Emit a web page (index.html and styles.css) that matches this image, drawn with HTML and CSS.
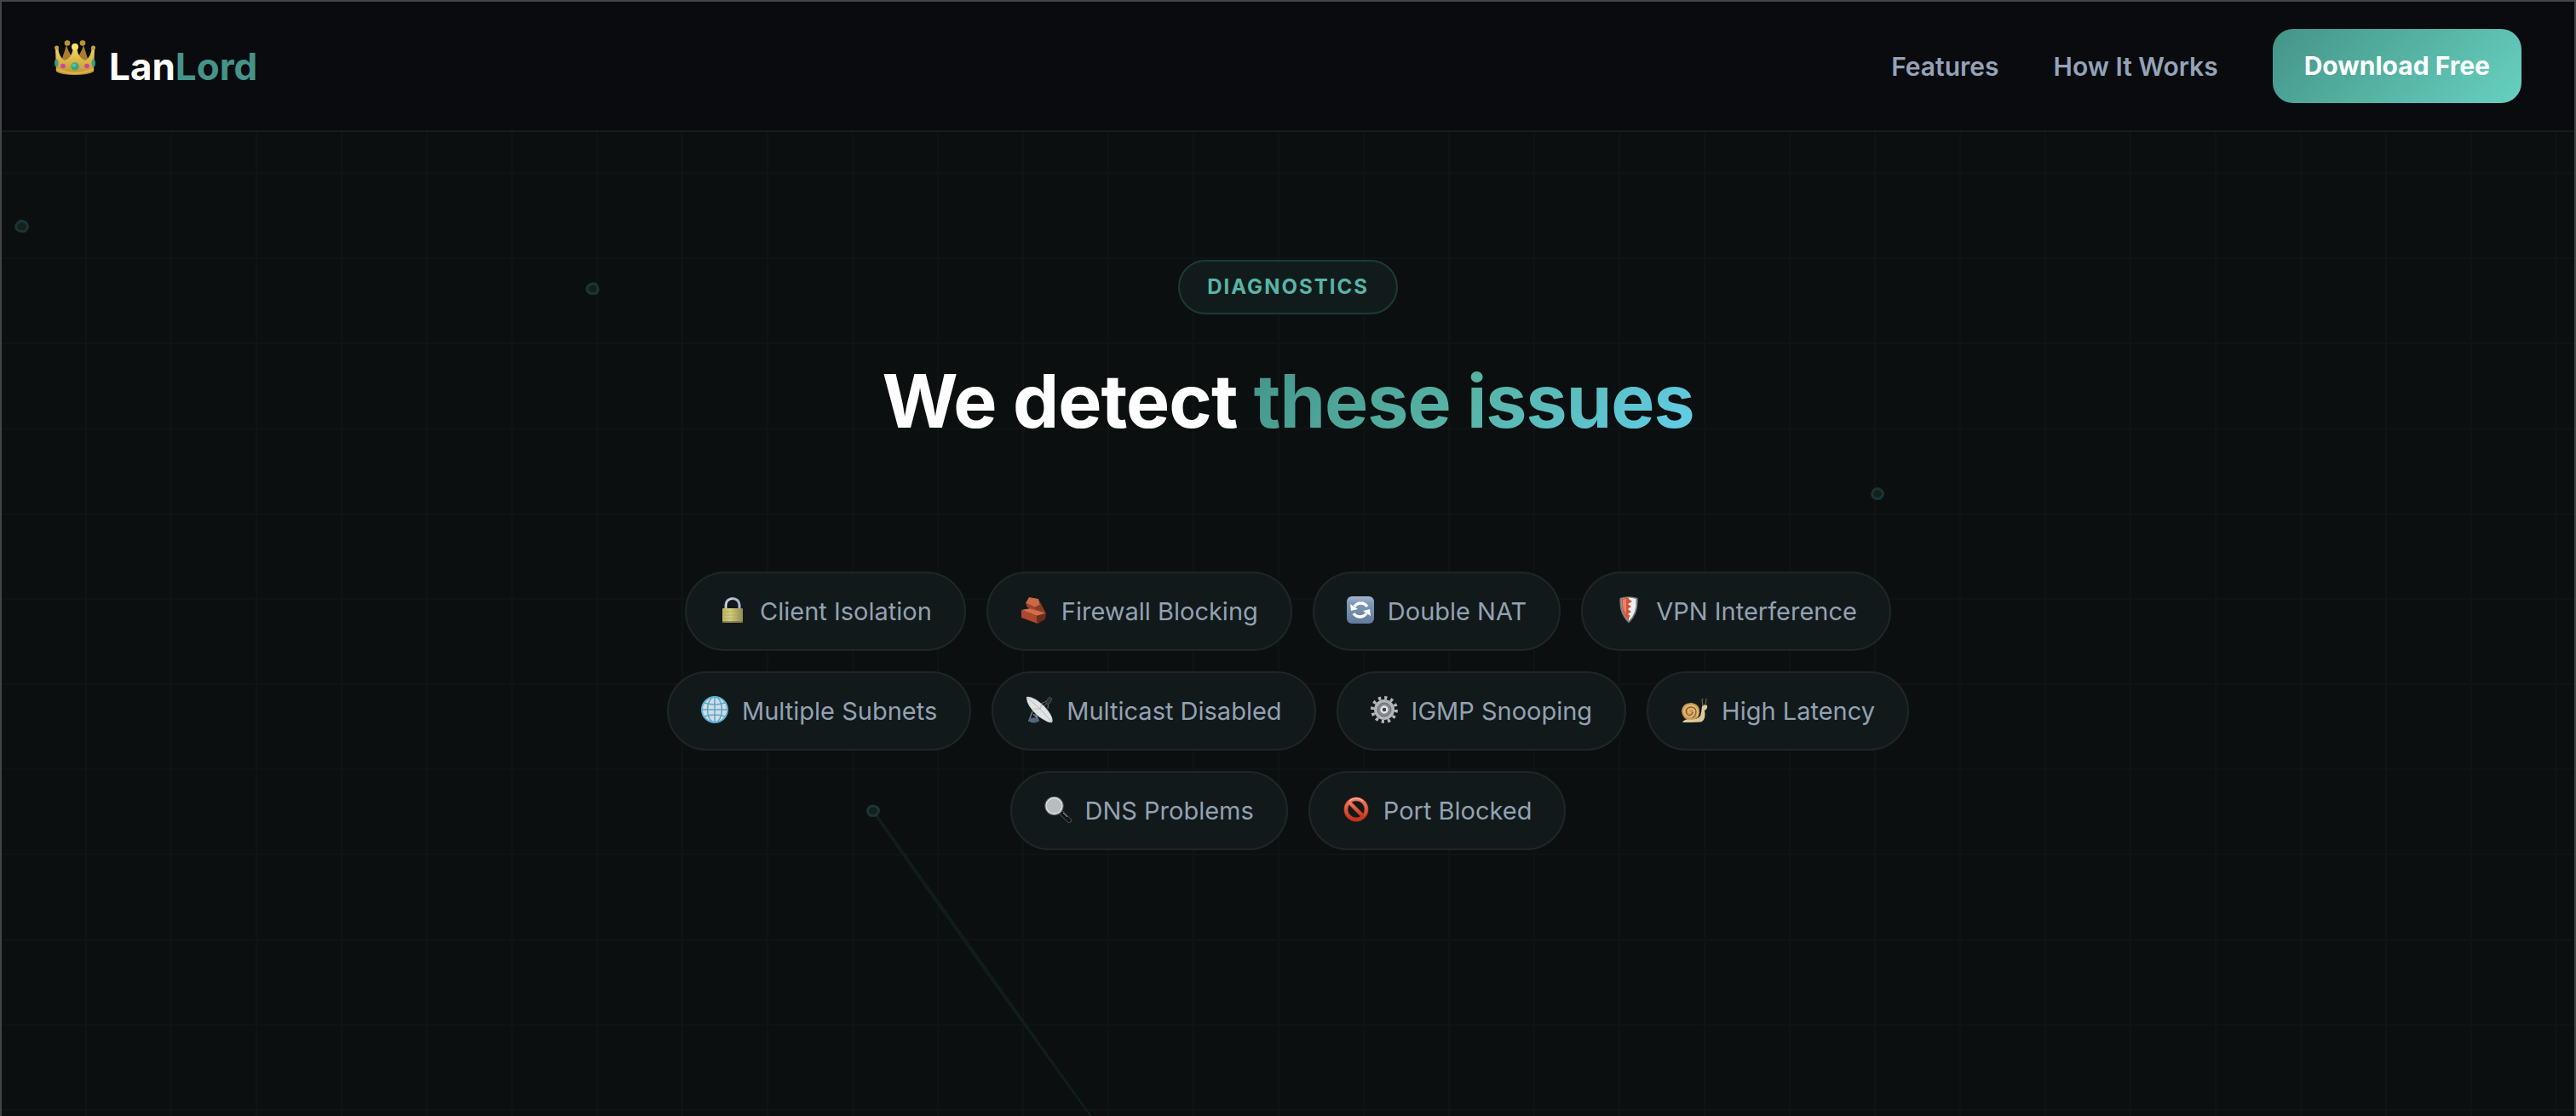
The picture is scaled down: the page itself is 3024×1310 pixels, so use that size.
FILE: index.html
```html
<!DOCTYPE html>
<html lang="en">
<head>
<meta charset="utf-8">
<meta name="viewport" content="width=device-width, initial-scale=1">
<title>LanLord</title>
<link rel="stylesheet" href="styles.css">
</head>
<body>
<svg class="network" aria-hidden="true">
  <g class="network-links">
    <path d="M1028 955Q1156 1134 1282 1312"/>
    <path d="M1027 956Q1152 1136 1282 1312"/>
  </g>
  <g class="network-nodes">
    <path d="M20 263Q24 257 30 261Q35 266 30 271Q22 273 19 268Q18 265 20 263Z"/>
    <path d="M690 336Q695 331 700 334Q704 340 700 344Q693 346 690 342Q688 339 690 336Z"/>
    <path d="M2199 576Q2204 571 2209 576Q2213 580 2207 585Q2201 587 2198 582Q2197 579 2199 576Z"/>
    <path d="M1020 948Q1024 944 1030 948Q1034 952 1028 957Q1021 959 1019 954Q1018 950 1020 948Z"/>
  </g>
</svg>

<header class="header">
  <a class="logo" href="#">
    <svg class="logo-crown" viewBox="0 0 48 42" aria-hidden="true">
      <defs><linearGradient id="gold" x1="0" y1="0" x2="0" y2="1"><stop offset="0" stop-color="#f3dc5f"/><stop offset="1" stop-color="#c08f33"/></linearGradient></defs>
      <path d="M7 28L14 6Q18 20 24 20Q30 20 34 6L41 28Z" fill="#a97b31"/>
      <g fill="#b8933b"><circle cx="15" cy="3.500" r="3.300"/><circle cx="33" cy="3.500" r="3.300"/></g>
      <path d="M1 9L4 8Q5 20 12 24Q20 22 22 9H26Q28 22 36 24Q43 20 44 8L47 9L46 37Q40 41 24 41Q8 41 2 37Z" fill="url(#gold)"/>
      <g fill="#c6a23c"><circle cx="2.500" cy="9" r="2.500"/><circle cx="45.500" cy="9" r="2.500"/></g>
      <circle cx="24" cy="8" r="4" fill="#f8e266"/>
      <path d="M2 34Q14 39 24 39Q34 39 46 34" fill="none" stroke="#dcb548" stroke-width="2"/>
      <circle cx="24" cy="31" r="4.700" fill="#3aa384"/><circle cx="23" cy="29.500" r="2" fill="#63c8a5"/>
      <circle cx="10" cy="30.500" r="2.800" fill="#c545a8"/><circle cx="38" cy="30.500" r="2.800" fill="#c545a8"/>
      <ellipse cx="2.300" cy="27" rx="2.200" ry="4.500" fill="#3f9e80"/><ellipse cx="45.700" cy="27" rx="2.200" ry="4.500" fill="#3f9e80"/>
    </svg>
    <span class="logo-name">Lan<span class="logo-accent">Lord</span></span>
  </a>
  <nav class="nav">
    <a class="nav-link" href="#features">Features</a>
    <a class="nav-link" href="#how">How It Works</a>
    <a class="button" href="#download">Download Free</a>
  </nav>
</header>

<main class="diagnostics">
  <p class="tag">DIAGNOSTICS</p>
  <h1 class="title">We detect <span class="title-accent">these issues</span></h1>
  <ul class="issues">
    <li class="issue">
      <svg class="icon" viewBox="0 0 32 32" aria-hidden="true">
        <defs><linearGradient id="brass"><stop offset="0" stop-color="#b9b367"/><stop offset=".4" stop-color="#d3cd7e"/><stop offset="1" stop-color="#8f8a51"/></linearGradient></defs>
        <path d="M8 15V10a8 7.500 0 0 1 16 0v5" fill="none" stroke="#a9b9d0" stroke-width="3"/>
        <path d="M8.500 14V10a7.500 7 0 0 1 7-7" fill="none" stroke="#e8eef5" stroke-width="1"/>
        <rect x="4" y="14" width="24" height="17" rx="1" fill="url(#brass)"/><path d="M4 18h24M4 22h24M4 26h24" stroke="#a6a05b" stroke-width=".6"/><path d="M4 30h24" stroke="#79733f" stroke-width="1.500"/>
      </svg>
      Client Isolation
    </li>
    <li class="issue">
      <svg class="icon" viewBox="0 0 32 32" aria-hidden="true">
        <path d="M10 1L21 3L23 10L17 13L6 8Z" fill="#cc6747"/><path d="M21 3L30 20L20 17L17 13L23 10Z" fill="#8d3b25"/>
        <path d="M1 16L12 14L30 20L19 23Z" fill="#d16c4c"/><path d="M1 16L19 23L20 32L1 25Z" fill="#ae472d"/><path d="M19 23L30 20L29 27L20 32Z" fill="#6e2b1d"/><path d="M6 8L17 13L20 17L8 13Z" fill="#a2452c"/>
      </svg>
      Firewall Blocking
    </li>
    <li class="issue">
      <svg class="icon" viewBox="0 0 32 32" aria-hidden="true">
        <defs><linearGradient id="key" x1="0" y1="0" x2="0" y2="1"><stop offset="0" stop-color="#a3b8d0"/><stop offset=".25" stop-color="#7d98b8"/><stop offset="1" stop-color="#617b9b"/></linearGradient></defs>
        <rect width="32" height="32" rx="6" fill="url(#key)"/>
        <path d="M9 12A9 9 0 0 1 24 12M23 20A9 9 0 0 1 8 20" fill="none" stroke="#fff" stroke-width="3.500"/>
        <path d="M4 9L5 17L13 15ZM28 23L27 15L19 17Z" fill="#fff"/>
      </svg>
      Double NAT
    </li>
    <li class="issue">
      <svg class="icon" viewBox="0 0 32 32" aria-hidden="true">
        <path d="M5.500 2Q16-1.500 26.500 2Q28 21 16 31.500Q4 21 5.500 2Z" fill="#777d7e"/>
        <path d="M7.500 3Q16 0 24.500 3Q26 19 16 29Q6 19 7.500 3Z" fill="#edf0f0"/>
        <path d="M7.500 3Q12 1.500 16 1.500V3L20 6L15 9L19 12L15 15L19 18L15 21L18 23L16 25V29Q6 19 7.500 3Z" fill="#d4553e"/>
        <path d="M9 4Q12 3 13 3V21Q8 14 9 4Z" fill="#e6836d"/>
      </svg>
      VPN Interference
    </li>
    <li class="issue">
      <svg class="icon" viewBox="0 0 32 32" aria-hidden="true">
        <circle cx="16" cy="16" r="15" fill="#d5dce0" stroke="#62b4d8" stroke-width="2"/>
        <g fill="none" stroke="#55a9d0" stroke-width="1.500"><path d="M16 1V31M1 16H31M4 8Q16 12 28 8M4 24Q16 20 28 24"/><ellipse cx="16" cy="16" rx="8.500" ry="15"/></g>
      </svg>
      Multiple Subnets
    </li>
    <li class="issue">
      <svg class="icon" viewBox="0 0 32 32" aria-hidden="true">
        <path d="M18 15L28 5M18 9L27 5L26 15" fill="none" stroke="#666d70"/><path d="M24 6L28 1L31 3L29 8L25 10Z" fill="#2b3135" stroke="#59636a" stroke-width=".6"/>
        <path d="M8 18L4 29L15 29L12 21M9 21L15 28" fill="none" stroke="#73818d" stroke-width="1.500"/><ellipse cx="9.500" cy="28.500" rx="6" ry="3" fill="#53677c"/>
        <path d="M1 1Q8-1 22 12Q34 25 31 31Q28 33 15 24Q0 11 1 1Z" fill="#c9cdd1"/><path d="M2 2Q10 1 22 13Q32 24 30 30Q18 28 10 18Q2 9 2 2Z" fill="#e1e4e6"/>
        <path d="M2 2L17 15L30 30M17 15L19 9M17 15L9 15" fill="none" stroke="#aab0b5" stroke-width=".8"/>
      </svg>
      Multicast Disabled
    </li>
    <li class="issue">
      <svg class="icon" viewBox="0 0 32 32" aria-hidden="true">
        <circle cx="16" cy="16" r="14" fill="none" stroke="#b2b6ba" stroke-width="4" stroke-dasharray="3.300 4"/>
        <circle cx="16" cy="16" r="10" fill="#858a90" stroke="#b2b6ba" stroke-width="4"/><circle cx="16" cy="16" r="8" fill="none" stroke="#666c72"/>
        <circle cx="16" cy="16" r="3.500" fill="#3c4248" stroke="#e1e3e5" stroke-width="2.500"/>
      </svg>
      IGMP Snooping
    </li>
    <li class="issue">
      <svg class="icon" viewBox="0 0 32 32" aria-hidden="true">
        <path d="M2 31Q5 26 15 27Q23 27 24 20L25 12Q27 9 31 11Q32 15 28 17Q30 26 25 30Q24 31 2 31Z" fill="#dec99b"/>
        <path d="M26 12L25 4M29 11L30 4" stroke="#76604a" stroke-width="1.200"/><circle cx="25.500" cy="4" r="1.300" fill="#503e31"/><circle cx="30" cy="4" r="1.300" fill="#503e31"/>
        <path d="M1 18Q2 8 12 8Q23 9 22 20Q21 28 12 28Q2 28 1 18Z" fill="#c99b55"/>
        <path d="M19 24Q22 12 12 11Q4 11 4 19Q6 25 12 24Q18 22 16 17Q13 13 10 16Q8 20 12 20" fill="none" stroke="#e3be7b" stroke-width="1.500"/>
        <path d="M14 26Q20 20 17 15Q12 11 7 15Q5 21 10 23Q14 22 14 19" fill="none" stroke="#7e4e27"/>
      </svg>
      High Latency
    </li>
    <li class="issue">
      <svg class="icon" viewBox="0 0 32 32" aria-hidden="true">
        <path d="M21 21L29 29" stroke="#555d62" stroke-width="6" stroke-linecap="round"/><path d="M21 21L29 29" stroke="#111518" stroke-width="4.500" stroke-linecap="round"/><path d="M22 20L27 25" stroke="#a6adb2"/>
        <circle cx="11.500" cy="12" r="10.500" fill="#b8bebe" stroke="#555d62" stroke-width="1.500"/><circle cx="11.500" cy="12" r="9.500" fill="none" stroke="#e0e5e8" stroke-width="1.300"/>
      </svg>
      DNS Problems
    </li>
    <li class="issue">
      <svg class="icon" viewBox="0 0 32 32" aria-hidden="true">
        <defs><linearGradient id="ban" x1="0" y1="0" x2="0" y2="1"><stop offset="0" stop-color="#f18068"/><stop offset="1" stop-color="#c9321b"/></linearGradient></defs>
        <g fill="none"><g stroke="#a6351f" stroke-width="5"><circle cx="16" cy="16" r="12"/><path d="M8 8L24 24"/></g><g stroke="url(#ban)" stroke-width="3.500"><circle cx="16" cy="16" r="12"/><path d="M8 8L24 24"/></g><path d="M8 6Q16 0 24 6" stroke="#f8c1b2"/></g>
      </svg>
      Port Blocked
    </li>
  </ul>
</main>
</body>
</html>
```
FILE: styles.css
```css
* { box-sizing: border-box; }

body {
  position: relative;
  min-height: 100vh;
  margin: 0;
  overflow: hidden;
  border: 2px solid #444546;
  border-bottom: 0;
  background-color: #0b0f10;
  color: #94a3b8;
  font-family: Inter, "Liberation Sans", sans-serif;
  font-size: 30px;
  line-height: 48px;
}

/* Square grid, 100px pitch */
body::before {
  content: "";
  position: absolute;
  inset: 0 0 0 -2px;
  z-index: -2;
  background:
    linear-gradient(#0e1415 2px, transparent 2px) 0 0 / 100px 100px,
    linear-gradient(90deg, #0e1415 2px, transparent 2px) 0 0 / 100px 100px;
}

.network {
  position: absolute;
  top: -2px;
  left: -2px;
  z-index: -1;
  width: 100%;
  height: 100%;
  overflow: visible;
  fill: none;
}
.network-links { stroke: #121e1e; stroke-width: 2; }
.network-nodes { fill: #132020; stroke: #1b3533; stroke-width: 3; }

.header {
  display: flex;
  align-items: center;
  justify-content: space-between;
  padding: 32px 62px;
  border-bottom: 2px solid #12201f;
  background: #0a0b0f;
}

.logo {
  display: flex;
  align-items: center;
  gap: 16px;
  color: #fff;
  font-size: 44px;
  font-weight: 700;
  line-height: 46px;
  text-decoration: none;
}
.logo-crown { width: 48px; height: 42px; margin-bottom: 20px; }
.logo-accent { color: #449488; }

.nav { display: flex; align-items: center; gap: 64px; }
.nav-link { color: #94a3b8; font-weight: 600; line-height: 46px; text-decoration: none; }

.button {
  padding: 20px 37px;
  border-radius: 24px;
  background: linear-gradient(135deg, #449488, #67d1bf);
  color: #fff;
  font-weight: 700;
  line-height: 47px;
  text-decoration: none;
}

.diagnostics {
  display: flex;
  flex-direction: column;
  align-items: center;
  padding: 150px 64px;
}

.tag {
  margin: 0;
  padding: 10px 32px;
  border: 2px solid #1c3a37;
  border-radius: 32px;
  background: #121b1b;
  color: #57b5a7;
  font-size: 24px;
  font-weight: 700;
  letter-spacing: 2px;
  line-height: 40px;
}

.title {
  margin: 48px 0 146px;
  color: #fff;
  font-size: 86px;
  font-weight: 700;
  letter-spacing: -1px;
  line-height: 108px;
}
.title-accent {
  background: linear-gradient(135deg, #449488, #57b5a7 50%, #63cfee);
  background-clip: text;
  color: transparent;
}

.issues {
  display: flex;
  flex-wrap: wrap;
  justify-content: center;
  gap: 24px;
  max-width: 1600px;
  margin: 0;
  padding: 0;
  list-style: none;
}
.issue {
  display: flex;
  align-items: center;
  gap: 16px;
  padding: 21px 38px;
  border: 2px solid #1e2627;
  border-radius: 48px;
  background: #11191a;
  color: #94a1b2;
  font-size: 29px;
  line-height: 47px;
}
.icon { width: 32px; height: 32px; margin-bottom: 4px; }
```
